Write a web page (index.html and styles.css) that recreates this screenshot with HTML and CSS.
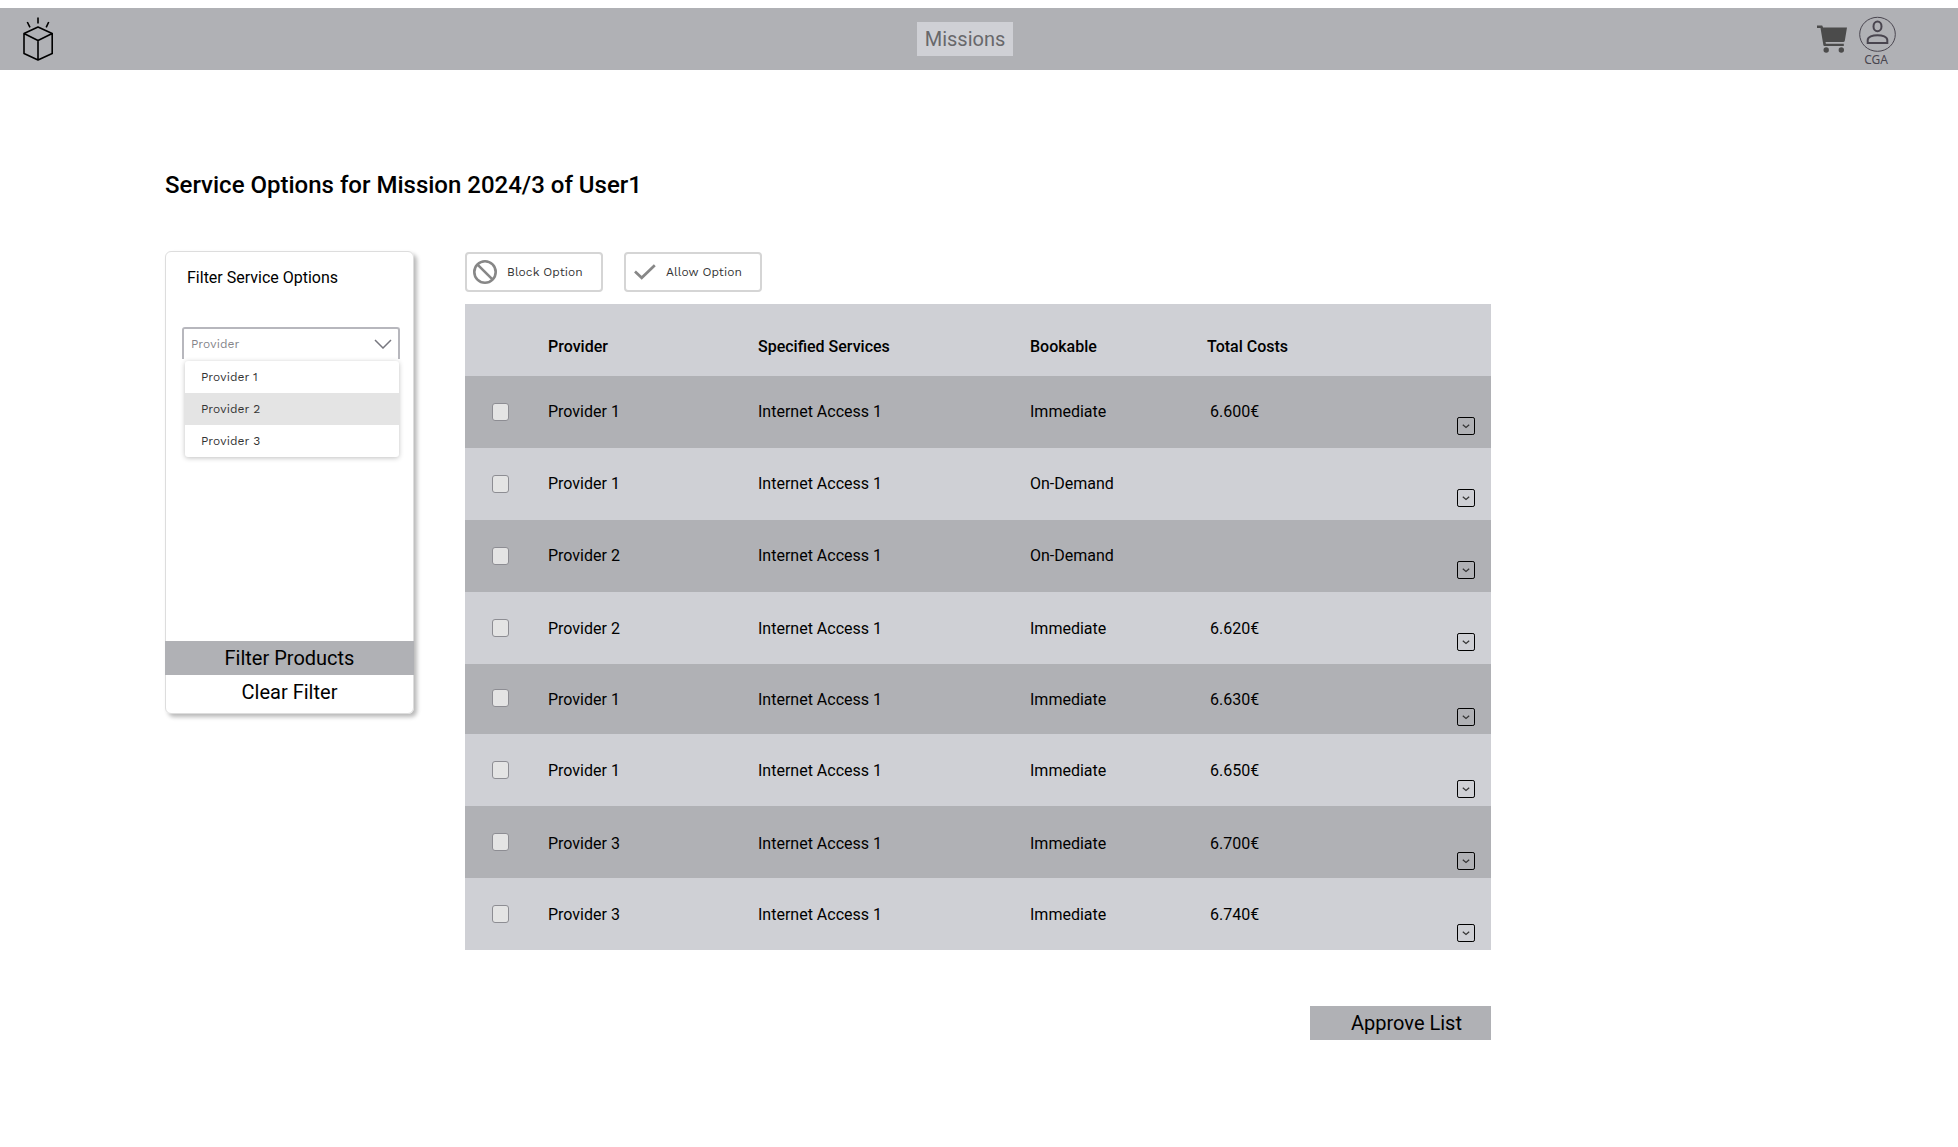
FILE: index.html
```html
<!DOCTYPE html>
<html lang="en">
<head>
<meta charset="utf-8">
<title>Service Options</title>
<link rel="stylesheet" href="styles.css">
</head>
<body>
<svg width="0" height="0" class="symbols">
  <symbol id="expand" viewBox="0 0 18 18">
    <rect x=".5" y=".5" width="17" height="17" rx="1.6" fill="none" stroke="#000" stroke-width="1"/>
    <path d="M5.8 7.8 9 10.4 12.2 7.8" fill="none" stroke="#333" stroke-width="1.2"/>
  </symbol>
</svg>
<header class="topbar">
  <svg class="logo" width="32" height="46" viewBox="0 0 32 46" fill="none" stroke="#000" stroke-width="1.6" stroke-linejoin="round">
    <path d="M2 16.5 16 10l14.200 6.500V36.500L16 43 2 36.500ZM2 16.500 16 23.500 30.200 16.500M16 23.500V43M16 .5V6.500M5.300 5 8 10.300M26.700 5 24.200 10.300"/>
  </svg>
  <a class="nav">Missions</a>
  <div class="user-area">
    <svg class="cart" width="30" height="28" viewBox="0 0 30 28" fill="#4b4b4b">
      <path d="M0 .4H5.200L6.100 2.400H30L27.800 15.700Q27.500 17 26.200 17H8.500L8.900 18.700H26.800V21H7.400Q6.600 21 6.400 20.200L3.500 3.100H0Z"/>
      <circle cx="9.200" cy="25" r="2.700"/><circle cx="24.300" cy="25" r="2.700"/>
    </svg>
    <div class="account">
      <svg width="38" height="36" viewBox="0 0 38 36" fill="none" stroke="#49454f">
        <ellipse cx="18.500" cy="18.300" rx="17.800" ry="17" stroke-width="1"/>
        <ellipse cx="18.500" cy="10.400" rx="4" ry="4.800" stroke-width="2"/>
        <path d="M8.700 27V24C8.700 17.500 28.300 17.500 28.300 24V27Z" stroke-width="2"/>
      </svg>
      <span class="initials">CGA</span>
    </div>
  </div>
</header>
<main class="page">
  <h1 class="title">Service Options for Mission 2024/3 of User1</h1>
  <div class="columns">
    <aside class="filter">
      <h2 class="filter-title">Filter Service Options</h2>
      <div class="select">
        <div class="select-box">
          <span>Provider</span>
          <svg width="18" height="10" viewBox="0 0 18 10" fill="none" stroke="#77777f" stroke-width="1.500"><path d="M1 1 9 9 17 1"/></svg>
        </div>
        <ul class="options">
          <li>Provider 1</li>
          <li class="active">Provider 2</li>
          <li>Provider 3</li>
        </ul>
      </div>
      <div class="filter-actions">
        <button class="apply">Filter Products</button>
        <button class="clear">Clear Filter</button>
      </div>
    </aside>
    <section class="content">
      <div class="tools">
        <button class="tool"><svg width="26" height="26" viewBox="0 0 26 26" fill="none" stroke="#878787" stroke-width="2.600"><circle cx="13" cy="13" r="10.700"/><path d="M5.300 5.300 20.700 20.700"/></svg><span>Block Option</span></button>
        <button class="tool"><svg width="26" height="26" viewBox="0 0 26 26" fill="none" stroke="#878787" stroke-width="2.700"><path d="M4 12.500 10.700 18.800 23.800 6.200"/></svg><span>Allow Option</span></button>
      </div>
      <div class="table">
        <div class="row head"><i></i><span>Provider</span><span>Specified Services</span><span>Bookable</span><span>Total Costs</span></div>
        <div class="row"><i class="check"></i><span>Provider 1</span><span>Internet Access 1</span><span>Immediate</span><span class="cost">6.600€</span><svg class="expand"><use href="#expand"/></svg></div>
        <div class="row"><i class="check"></i><span>Provider 1</span><span>Internet Access 1</span><span>On-Demand</span><span class="cost"></span><svg class="expand"><use href="#expand"/></svg></div>
        <div class="row"><i class="check"></i><span>Provider 2</span><span>Internet Access 1</span><span>On-Demand</span><span class="cost"></span><svg class="expand"><use href="#expand"/></svg></div>
        <div class="row lower"><i class="check"></i><span>Provider 2</span><span>Internet Access 1</span><span>Immediate</span><span class="cost">6.620€</span><svg class="expand"><use href="#expand"/></svg></div>
        <div class="row short"><i class="check"></i><span>Provider 1</span><span>Internet Access 1</span><span>Immediate</span><span class="cost">6.630€</span><svg class="expand"><use href="#expand"/></svg></div>
        <div class="row lower deep"><i class="check"></i><span>Provider 1</span><span>Internet Access 1</span><span>Immediate</span><span class="cost">6.650€</span><svg class="expand"><use href="#expand"/></svg></div>
        <div class="row lowest deep"><i class="check"></i><span>Provider 3</span><span>Internet Access 1</span><span>Immediate</span><span class="cost">6.700€</span><svg class="expand"><use href="#expand"/></svg></div>
        <div class="row lower deep"><i class="check"></i><span>Provider 3</span><span>Internet Access 1</span><span>Immediate</span><span class="cost">6.740€</span><svg class="expand"><use href="#expand"/></svg></div>
      </div>
      <button class="approve">Approve List</button>
    </section>
  </div>
</main>
</body>
</html>
```
FILE: styles.css
```css
* { box-sizing: border-box; }
body { margin: 0; padding-top: 8px; background: #fff; color: #000; font-family: Roboto, sans-serif; font-size: 16px; }
button { border: 0; padding: 0; background: none; font: inherit; color: inherit; }
svg { display: block; flex: none; }
.symbols { position: absolute; }
.topbar { display: grid; grid-template-columns: 917px 96px 1fr; height: 62px; background: #b0b1b5; }
.logo { margin: 9px 0 0 22px; }
.nav { height: 34px; margin-top: 14px; background: #cfd0d5; color: #68686b; font-size: 20px; line-height: 34px; text-align: center; }
.user-area { display: flex; justify-content: flex-end; gap: 12px; padding-right: 61px; }
.cart { margin-top: 17px; }
.account { display: flex; flex-direction: column; align-items: center; width: 38px; padding-top: 8px; }
.initials { margin-right: 4px; color: #49454f; font-family: "Noto Sans", sans-serif; font-size: 12px; line-height: 16px; }
.page { padding: 98px 0 0 165px; }
.title { margin: 0; font-size: 24px; font-weight: 500; line-height: 34px; }
.columns { display: flex; gap: 51px; margin-top: 49px; }
.filter { display: flex; flex-direction: column; width: 249px; height: 463px; border: 1px solid #ddd; border-radius: 6px; box-shadow: 3px 3px 4px rgba(0,0,0,.28); }
.filter-title { margin: 16px 0 0 21px; font-size: 16px; font-weight: 400; line-height: 20px; }
.select { width: 218px; margin: 39px 0 0 16px; font-family: "Work Sans", Inter, sans-serif; font-size: 12px; letter-spacing: .05px; }
.select-box { display: flex; align-items: center; justify-content: space-between; height: 32px; padding: 0 6px 0 7px; border: 2px solid #b7b7bd; border-bottom: 0; border-radius: 3px 3px 0 0; color: #85858a; }
.options { width: 214px; margin: 2px 0 0 3px; padding: 0; list-style: none; border-radius: 3px; box-shadow: 0 1px 5px rgba(0,0,0,.25); color: #333; overflow: hidden; }
.options li { height: 32px; padding-left: 16px; line-height: 32px; }
.options .active { background: #e4e4e4; }
.filter-actions { display: grid; margin: auto -1px 4px; font-size: 20px; }
.filter-actions button { height: 34px; }
.apply, .approve { background: #b0b1b5; }
.content { width: 1026px; padding-top: 1px; }
.tools { display: flex; gap: 21px; }
.tool { display: flex; align-items: center; gap: 9px; width: 138px; height: 40px; padding-left: 7px; border: 2px solid #d5d5d5; border-radius: 4px; color: #333; font-family: "Work Sans", Inter, sans-serif; font-size: 12px; letter-spacing: .05px; }
.tool svg { margin-left: -2px; }
.table { margin-top: 12px; }
.row { display: grid; grid-template-columns: 83px 210px 272px 177px 250px 18px; align-items: start; height: 72px; background: #cfd0d5; --text: 26px; --box: 27px; --arrow: 41px; }
.row:nth-child(even) { background: #b0b1b5; }
.row span { margin-top: var(--text); line-height: 20px; }
.head { font-weight: 500; --text: 33px; }
.lower { --text: 27px; }
.lowest { --text: 28px; }
.short { height: 70px; --box: 25px; --arrow: 44px; }
.deep { --arrow: 46px; }
.cost { padding-left: 3px; }
.check { width: 17px; height: 18px; margin: var(--box) 0 0 27px; border: 1px solid #8d8d93; border-radius: 3px; background: #e4e4e4; }
.expand { width: 18px; height: 18px; margin-top: var(--arrow); }
.approve { display: block; width: 181px; height: 34px; margin: 56px 0 0 auto; padding-left: 12px; font-size: 20px; }
```
